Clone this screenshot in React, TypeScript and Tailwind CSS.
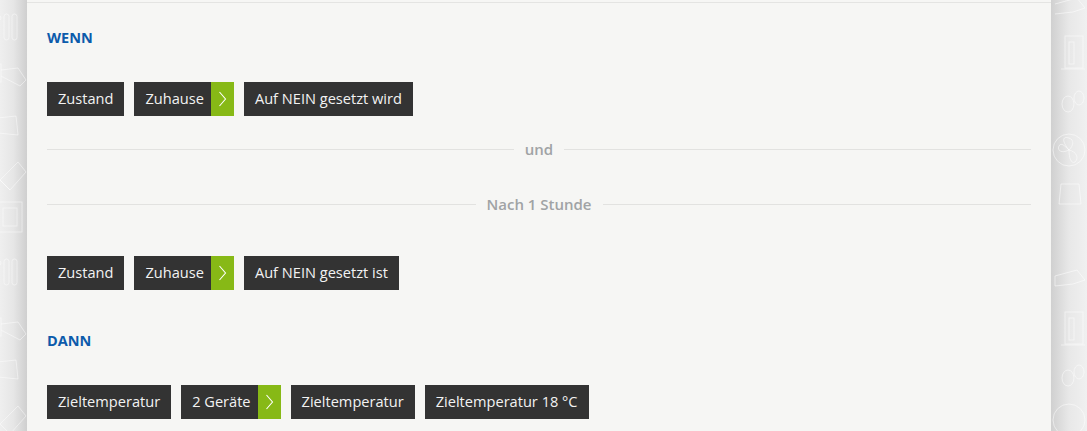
type Chip = { label: string; arrow?: boolean }

const wennRow1: Chip[] = [
  { label: "Zustand" },
  { label: "Zuhause", arrow: true },
  { label: "Auf NEIN gesetzt wird" },
]

const wennRow2: Chip[] = [
  { label: "Zustand" },
  { label: "Zuhause", arrow: true },
  { label: "Auf NEIN gesetzt ist" },
]

const dannRow: Chip[] = [
  { label: "Zieltemperatur" },
  { label: "2 Geräte", arrow: true },
  { label: "Zieltemperatur" },
  { label: "Zieltemperatur 18 °C" },
]

function ChipRow({ chips, className = "" }: { chips: Chip[]; className?: string }) {
  return (
    <div className={`flex gap-[10px] ${className}`}>
      {chips.map((c, i) => (
        <div key={i} className="flex h-[34px] bg-[#333333] text-[14.6px] text-[#f2f2f2]">
          <span className={`flex items-center pl-[11px] ${c.arrow ? "pr-[7px]" : "pr-[11px]"}`}>{c.label}</span>
          {c.arrow && (
            <span className="flex w-[23px] items-center justify-center bg-[#87b916]">
              <svg width="9" height="16" viewBox="0 0 9 16" fill="none">
                <path d="M1.5 1 L7.5 8 L1.5 15" stroke="#ffffff" strokeWidth="1.1" />
              </svg>
            </span>
          )}
        </div>
      ))}
    </div>
  )
}

function Divider({ label, className = "" }: { label: string; className?: string }) {
  return (
    <div className={`flex h-[20px] items-center ${className}`}>
      <div className="h-px flex-1 bg-[#e2e2e0]" />
      <span className="px-[11px] text-[15px] font-semibold text-[#a0a3a5]">{label}</span>
      <div className="h-px flex-1 bg-[#e2e2e0]" />
    </div>
  )
}

// faint outline icons printed on the page background
function Pattern({ offset }: { offset: number }) {
  return (
    <svg width="60" height="431" viewBox="0 0 60 431" className="absolute top-0" style={{ left: offset }}>
      <g fill="none" stroke="#ffffff" strokeOpacity="0.45" strokeWidth="1">
        <circle cx="3" cy="18" r="2" />
        <rect x="8" y="14" width="5" height="26" rx="2.5" />
        <rect x="16" y="14" width="5" height="26" rx="2.5" />
        <rect x="1" y="64" width="4" height="18" />
        <path d="M5 70 L22 68 L30 80 L24 86 L5 76" />
        <path d="M2 118 L20 116 L22 135 L2 133 Z" />
        <path d="M4 180 L22 162 L30 172 L14 190 Z M4 180 L14 190" />
        <rect x="2" y="202" width="24" height="30" />
        <rect x="7" y="208" width="14" height="18" />
        <circle cx="3" cy="263" r="2" />
        <rect x="8" y="259" width="5" height="26" rx="2.5" />
        <rect x="16" y="259" width="5" height="26" rx="2.5" />
        <rect x="1" y="318" width="4" height="18" />
        <path d="M5 324 L22 322 L30 334 L24 340 L5 330" />
        <path d="M2 362 L20 360 L22 379 L2 377 Z" />
        <path d="M4 424 L22 406 L30 416 L14 434 Z" />
      </g>
    </svg>
  )
}

function PatternRight() {
  return (
    <svg width="36" height="431" viewBox="0 0 36 431" className="absolute left-0 top-0">
      <g fill="none" stroke="#ffffff" strokeOpacity="0.5" strokeWidth="1">
        <path d="M4 4 L26 -2 L34 8 L22 12 L4 14" />
        <rect x="14" y="36" width="18" height="32" />
        <rect x="18" y="42" width="5" height="22" />
        <path d="M10 69 L34 69" />
        <ellipse cx="17" cy="104" rx="6" ry="8" />
        <ellipse cx="28" cy="98" rx="5" ry="7" />
        <circle cx="18" cy="150" r="16" />
        <path d="M18 150 C 10 140, 12 136, 18 138 C 24 140, 22 146, 18 150 C 26 152, 28 158, 24 162 C 20 164, 18 158, 18 150 C 10 154, 6 150, 8 146 C 10 142, 14 146, 18 150" />
        <path d="M10 184 L28 184 L30 204 L8 204 Z" />
        <path d="M4 276 L26 270 L34 280 L22 284 L4 286 Z" />
        <rect x="14" y="312" width="18" height="32" />
        <rect x="18" y="318" width="5" height="22" />
        <path d="M10 345 L34 345" />
        <ellipse cx="17" cy="378" rx="6" ry="8" />
        <ellipse cx="28" cy="372" rx="5" ry="7" />
        <circle cx="18" cy="420" r="16" />
      </g>
    </svg>
  )
}

export default function App() {
  return (
    <main
      className="flex h-[431px] w-full overflow-hidden bg-[#eeeeee]"
      style={{ fontFamily: '"Open Sans", "Noto Sans", sans-serif' }}
    >
      <div className="relative w-[27px] shrink-0 overflow-hidden bg-gradient-to-r from-[#efefef] via-[#e6e6e6] to-[#cfcfcf]">
        <Pattern offset={-4} />
      </div>

      <section className="flex-1 bg-[#f6f6f4] pt-[2px]">
        <div className="border-t border-[#e4e4e2] px-[20px] pt-[25px]">
          <h2 className="text-[14.5px] font-bold leading-[20px] text-[#0c5bab]">WENN</h2>
          <ChipRow chips={wennRow1} className="mt-[34px]" />
          <Divider label="und" className="mt-[23px]" />
          <Divider label="Nach 1 Stunde" className="mt-[35px]" />
          <ChipRow chips={wennRow2} className="mt-[42px]" />
          <h2 className="mt-[41px] text-[14.5px] font-bold leading-[20px] text-[#0c5bab]">DANN</h2>
          <ChipRow chips={dannRow} className="mt-[34px]" />
        </div>
      </section>

      <div className="relative w-[36px] shrink-0 overflow-hidden bg-gradient-to-r from-[#d0d0d0] via-[#e8e8e8] to-[#f0f0f0]">
        <PatternRight />
      </div>
    </main>
  )
}
